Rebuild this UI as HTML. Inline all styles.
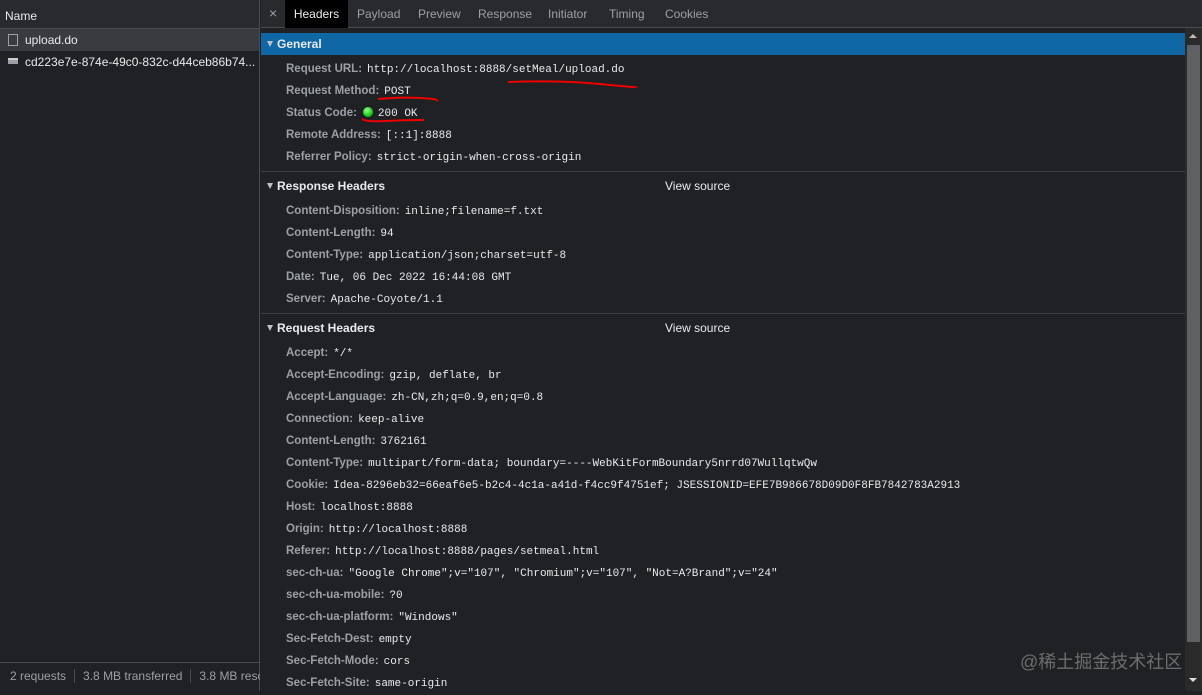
<!DOCTYPE html>
<html><head><meta charset="utf-8"><style>
*{margin:0;padding:0;box-sizing:border-box}
body{width:1202px;height:691px;background:#202124;font-family:"Liberation Sans",sans-serif;font-size:12px;color:#e8eaed;position:relative;overflow:hidden}
.left{position:absolute;left:0;top:0;width:260px;height:691px;background:#202124;border-right:1px solid #494c50}
.lh{height:29px;background:#292a2d;border-bottom:1px solid #494c50;padding:9px 5px;color:#e8eaed}
.row{height:22px;line-height:22px;padding-left:25px;position:relative;white-space:nowrap;overflow:hidden}
.sel{background:#393b3e}
.foot{position:absolute;left:0;top:662px;width:260px;height:29px;border-top:1px solid #494c50;color:#9aa0a6;line-height:27px;padding-left:10px;white-space:nowrap;overflow:hidden}
.foot span{border-right:1px solid #494c50;padding-right:8px;margin-right:8px}
.tabs{position:absolute;left:261px;top:0;right:0;height:28px;background:#292a2d;border-bottom:1px solid #494c50}
.tab{position:absolute;top:0;height:28px;line-height:29px;color:#9aa0a6}
.main{position:absolute;left:261px;top:28px;width:924px;height:663px}
.sh{position:absolute;left:0;width:924px;height:22px;line-height:22px;padding-left:16px;font-weight:bold;color:#e8eaed}
.sh:before{content:"";position:absolute;left:6px;top:8px;border-left:3.5px solid transparent;border-right:3.5px solid transparent;border-top:6px solid #bdc1c6}
.vs{position:absolute;left:404px;font-weight:normal}
.r{position:absolute;left:25px;height:22px;line-height:22px;white-space:nowrap}
.k{color:#9aa0a6;font-weight:bold;font-size:11.5px}
.v{font-family:"Liberation Mono",monospace;font-size:11px;color:#e8eaed;margin-left:5px}
.sep{position:absolute;left:0;width:924px;height:1px;background:#3c3f43}
.sb{position:absolute;left:1185px;top:28px;width:17px;height:663px;background:#2a2a2a}
.th{position:absolute;left:1187px;top:45px;width:13px;height:597px;background:#5f6063}
</style></head><body>
<div class="left">
<div class="lh">Name</div>
<div class="row sel"><span style="position:absolute;left:8px;top:5px;width:10px;height:12px;border:1px solid #9aa0a6"></span>upload.do</div>
<div class="row"><span style="position:absolute;left:8px;top:7px;width:10px;height:6px;background:#9aa0a6;border-top:2px solid #ccc"></span>cd223e7e-874e-49c0-832c-d44ceb86b74...</div>
<div class="foot"><span>2 requests</span><span>3.8 MB transferred</span>3.8 MB resources</div>
</div>
<div class="tabs">
<div class="tab" style="left:8px;font-size:14px;line-height:27px">×</div>
<div class="tab" style="left:24px;width:63px;background:#000;color:#e8eaed;text-align:center">Headers</div>
<div class="tab" style="left:96px">Payload</div>
<div class="tab" style="left:157px">Preview</div>
<div class="tab" style="left:217px">Response</div>
<div class="tab" style="left:287px">Initiator</div>
<div class="tab" style="left:348px">Timing</div>
<div class="tab" style="left:404px">Cookies</div>
</div>
<div class="main">
<div class="sh" style="top:5px;background:#0f67a6">General</div>
<div class="r" style="top:29px"><span class="k">Request URL:</span><span class="v">http://localhost:8888/setMeal/upload.do</span></div>
<div class="r" style="top:51px"><span class="k">Request Method:</span><span class="v">POST</span></div>
<div class="r" style="top:73px"><span class="k">Status Code:</span><span style="display:inline-block;width:10px;height:10px;border-radius:50%;background:radial-gradient(circle at 40% 35%,#9f9,#1c1 60%);margin-left:6px;vertical-align:-1px"></span><span class="v">200 OK</span></div>
<div class="r" style="top:95px"><span class="k">Remote Address:</span><span class="v">[::1]:8888</span></div>
<div class="r" style="top:117px"><span class="k">Referrer Policy:</span><span class="v">strict-origin-when-cross-origin</span></div>
<div class="sep" style="top:143px"></div>
<div class="sh" style="top:147px">Response Headers<span class="vs">View source</span></div>
<div class="r" style="top:171px"><span class="k">Content-Disposition:</span><span class="v">inline;filename=f.txt</span></div>
<div class="r" style="top:193px"><span class="k">Content-Length:</span><span class="v">94</span></div>
<div class="r" style="top:215px"><span class="k">Content-Type:</span><span class="v">application/json;charset=utf-8</span></div>
<div class="r" style="top:237px"><span class="k">Date:</span><span class="v">Tue, 06 Dec 2022 16:44:08 GMT</span></div>
<div class="r" style="top:259px"><span class="k">Server:</span><span class="v">Apache-Coyote/1.1</span></div>
<div class="sep" style="top:285px"></div>
<div class="sh" style="top:289px">Request Headers<span class="vs">View source</span></div>
<div class="r" style="top:313px"><span class="k">Accept:</span><span class="v">*/*</span></div>
<div class="r" style="top:335px"><span class="k">Accept-Encoding:</span><span class="v">gzip, deflate, br</span></div>
<div class="r" style="top:357px"><span class="k">Accept-Language:</span><span class="v">zh-CN,zh;q=0.9,en;q=0.8</span></div>
<div class="r" style="top:379px"><span class="k">Connection:</span><span class="v">keep-alive</span></div>
<div class="r" style="top:401px"><span class="k">Content-Length:</span><span class="v">3762161</span></div>
<div class="r" style="top:423px"><span class="k">Content-Type:</span><span class="v">multipart/form-data; boundary=----WebKitFormBoundary5nrrd07WullqtwQw</span></div>
<div class="r" style="top:445px"><span class="k">Cookie:</span><span class="v">Idea-8296eb32=66eaf6e5-b2c4-4c1a-a41d-f4cc9f4751ef; JSESSIONID=EFE7B986678D09D0F8FB7842783A2913</span></div>
<div class="r" style="top:467px"><span class="k">Host:</span><span class="v">localhost:8888</span></div>
<div class="r" style="top:489px"><span class="k">Origin:</span><span class="v">http://localhost:8888</span></div>
<div class="r" style="top:511px"><span class="k">Referer:</span><span class="v">http://localhost:8888/pages/setmeal.html</span></div>
<div class="r" style="top:533px"><span class="k">sec-ch-ua:</span><span class="v">"Google Chrome";v="107", "Chromium";v="107", "Not=A?Brand";v="24"</span></div>
<div class="r" style="top:555px"><span class="k">sec-ch-ua-mobile:</span><span class="v">?0</span></div>
<div class="r" style="top:577px"><span class="k">sec-ch-ua-platform:</span><span class="v">"Windows"</span></div>
<div class="r" style="top:599px"><span class="k">Sec-Fetch-Dest:</span><span class="v">empty</span></div>
<div class="r" style="top:621px"><span class="k">Sec-Fetch-Mode:</span><span class="v">cors</span></div>
<div class="r" style="top:643px"><span class="k">Sec-Fetch-Site:</span><span class="v">same-origin</span></div>
</div>
<svg style="position:absolute;left:0;top:0" width="1202" height="691">
<path d="M508 82 Q560 80 600 84 T636 87" stroke="#e00" stroke-width="2" fill="none"/>
<path d="M378 99 Q400 97 420 98 T437 101" stroke="#e00" stroke-width="2" fill="none"/>
<path d="M362 119 Q366 122 385 121 T424 120" stroke="#e00" stroke-width="2" fill="none"/>
</svg>
<div class="sb"></div><div class="th"></div>
<div style="position:absolute;left:1189px;top:34px;border-left:4px solid transparent;border-right:4px solid transparent;border-bottom:4px solid #bbb"></div>
<div style="position:absolute;left:1189px;top:678px;border-left:4px solid transparent;border-right:4px solid transparent;border-top:4px solid #ddd"></div>
<div style="position:absolute;left:1020px;top:648px;font-family:'Liberation Sans','Noto Sans CJK SC',sans-serif;font-size:18px;color:rgba(200,200,200,0.45)">@稀土掘金技术社区</div>
</body></html>
